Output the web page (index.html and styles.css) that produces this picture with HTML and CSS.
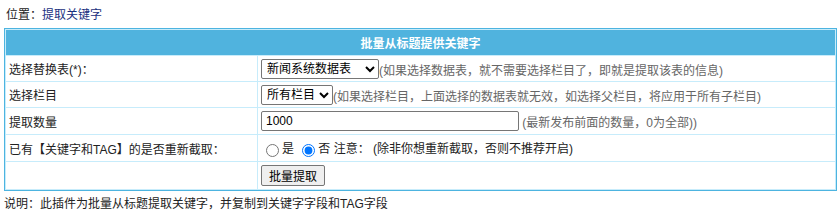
FILE: index.html
```html
<!DOCTYPE html>
<html lang="zh-CN">
<head>
    <meta charset="UTF-8">
    <title>提取关键字</title>
    <link rel="stylesheet" href="styles.css">
</head>
<body>
    <div class="position">位置：<a href="#">提取关键字</a></div>

    <form>
        <table class="tableborder">
            <tr>
                <td class="header" colspan="2">批量从标题提供关键字</td>
            </tr>
            <tr class="row1">
                <td class="label">选择替换表(*)：</td>
                <td class="field">
                    <select class="sel-table">
                        <option>新闻系统数据表</option>
                    </select><span class="note">(如果选择数据表，就不需要选择栏目了，即就是提取该表的信息)</span>
                </td>
            </tr>
            <tr class="row2">
                <td class="label">选择栏目</td>
                <td class="field">
                    <select class="sel-class">
                        <option>所有栏目</option>
                    </select><span class="note">(如果选择栏目，上面选择的数据表就无效，如选择父栏目，将应用于所有子栏目)</span>
                </td>
            </tr>
            <tr class="row3">
                <td class="label">提取数量</td>
                <td class="field">
                    <input type="text" class="num" value="1000">
                    <span class="note">(最新发布前面的数量，0为全部))</span>
                </td>
            </tr>
            <tr class="row4">
                <td class="label">已有【关键字和TAG】的是否重新截取：</td>
                <td class="field radios">
                    <label><input type="radio" name="redo">是</label>
                    <label><input type="radio" name="redo" checked>否</label>
                    <span>注意：</span>
                    <span>(除非你想重新截取，否则不推荐开启)</span>
                </td>
            </tr>
            <tr class="row5">
                <td class="label"></td>
                <td class="field">
                    <button type="button" class="btn">批量提取</button>
                </td>
            </tr>
        </table>
    </form>

    <p class="desc">说明：此插件为批量从标题提取关键字，并复制到关键字字段和TAG字段</p>
</body>
</html>
```

FILE: styles.css
```css
body {
    margin: 0;
    padding: 0 4px;
    font-family: "Liberation Sans", "Noto Sans CJK SC", sans-serif;
    font-size: 12px;
    color: #222;
    background: #fff;
}

a {
    color: #1a2f80;
    text-decoration: none;
}

.position {
    padding: 8px 2px 6px;
    line-height: 14px;
}

form {
    margin: 0;
}

.tableborder {
    width: 833px;
    border: 1px solid #4db4e0;
    border-spacing: 1px;
    background: #c7ecfb;
}

.tableborder td {
    background: #fff;
    padding: 0 3px;
}

.tableborder .header {
    background: #50b3de;
    color: #fff;
    font-weight: bold;
    text-align: center;
    height: 25px;
}

.label {
    width: 245px;
}

.row1 td,
.row2 td {
    height: 25px;
}

.row3 td,
.row4 td {
    height: 26px;
}

.row5 td {
    height: 27px;
}

select,
input,
button {
    font-family: "Liberation Sans", "Noto Sans CJK SC", sans-serif;
    font-size: 12px;
    color: #000;
    vertical-align: middle;
}

select {
    height: 20px;
    margin: 0;
    padding: 0 0 0 1px;
    border: 1px solid #767676;
    border-radius: 2px;
    background: #fff;
}

.sel-table {
    width: 118px;
}

.sel-class {
    width: 72px;
}

.num {
    width: 258px;
    height: 20px;
    box-sizing: border-box;
    margin: 0;
    padding: 0 4px;
    border: 1px solid #767676;
    border-radius: 2px;
}

.note {
    color: #666;
    vertical-align: middle;
}

.radios input {
    margin: 0 3px 0 5px;
    width: 13px;
    height: 13px;
}

.btn {
    width: 64px;
    height: 21px;
    padding: 0;
    border: 1px solid #767676;
    border-radius: 2px;
    background: #efefef;
}

.desc {
    margin: 6px 0 0;
    line-height: 14px;
}
```
